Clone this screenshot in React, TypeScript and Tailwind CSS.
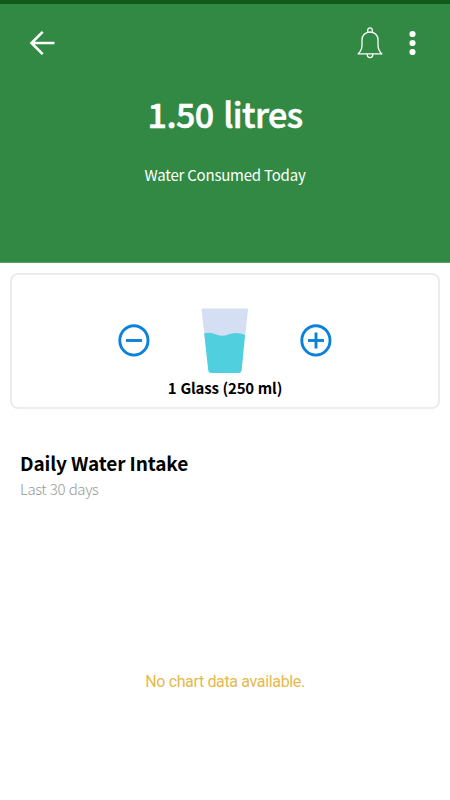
import { useState } from 'react'

const GLASS_ML = 250

function BackIcon() {
  return (
    <svg width="26" height="26" viewBox="0 0 26 26" fill="none" stroke="#fff" strokeWidth="2.6">
      <path d="M25.5 13H3M13.7 1.8L2.5 13L13.7 24.2" />
    </svg>
  )
}

function BellIcon() {
  return (
    <svg width="26" height="32" viewBox="0 0 26 32" fill="none" stroke="#fff" strokeWidth="1.3">
      <path d="M10.7 5.4V3.2a2.3 2.3 0 0 1 4.6 0v2.2" />
      <path d="M13 5C8.2 5 5 8.5 5 13v5c0 4-1.3 6.5-3.9 8.9h23.8C22.3 24.5 21 22 21 18v-5c0-4.5-3.2-8-8-8z" strokeLinejoin="round" />
      <path d="M10.2 27a2.8 3.7 0 0 0 5.6 0" />
    </svg>
  )
}

function MoreIcon() {
  return (
    <svg width="8" height="26" viewBox="0 0 8 26" fill="#fff">
      <circle cx="4.5" cy="4" r="3.1" />
      <circle cx="4.5" cy="13" r="3.1" />
      <circle cx="4.5" cy="22" r="3.1" />
    </svg>
  )
}

function RoundIcon({ plus = false }: { plus?: boolean }) {
  return (
    <svg width="32" height="34" viewBox="0 0 32 34" fill="none" stroke="#0a82dc" strokeWidth="2.9">
      <ellipse cx="15.9" cy="16.4" rx="14.1" ry="14.7" />
      <path d="M8 16.5h16" />
      {plus && <path d="M16 8.5v16" />}
    </svg>
  )
}

function GlassIcon() {
  return (
    <svg width="48" height="66" viewBox="0 0 48 66">
      <path d="M1.5 0.5h44.2a1.3 1.3 0 0 1 1.3 1.5L44 30H3.8L0.6 2a1.3 1.3 0 0 1 .9-1.5z" fill="#d5dff4" />
      <path d="M3.2 25.5c4-1.7 8-.6 12 1 4.5 1.7 8 1.6 12 0 5.5-2.1 11-2.2 16.9.6L40.7 62c-.2 2-1.2 3-2.9 3H10.2c-1.7 0-2.8-1-3-3z" fill="#50cfde" />
    </svg>
  )
}

export default function App() {
  const [glasses, setGlasses] = useState(6)
  const litres = ((glasses * GLASS_ML) / 1000).toFixed(2)

  return (
    <div className="flex h-[800px] w-[450px] flex-col overflow-hidden bg-white font-['Noto_Sans_CJK_SC','Noto_Sans',sans-serif]">
      <header className="h-[263px] shrink-0 border-t-4 border-b border-t-[#125a1b] border-b-[#58a168] bg-[#318943] text-white">
        <div className="flex h-[78px] items-center pr-[34px] pl-[29px]">
          <button className="mr-auto" aria-label="Back"><BackIcon /></button>
          <button className="mr-[25px]" aria-label="Reminders"><BellIcon /></button>
          <button aria-label="More"><MoreIcon /></button>
        </div>
        <div className="flex flex-col items-center whitespace-nowrap">
          <h1 className="mt-[7px] h-[50px] text-[34px] leading-[50px] font-medium tracking-[-0.55px] [word-spacing:2.5px] [-webkit-text-stroke:0.6px_white]">{litres} litres</h1>
          <p className="mt-6 text-[15px] leading-6 tracking-[-0.22px]">Water Consumed Today</p>
        </div>
      </header>

      <section className="mx-[10px] mt-[10px] flex h-[136px] shrink-0 flex-col items-center rounded-lg border-2 border-[#ececec] pt-[33px]">
        <div className="flex items-center justify-center">
          <button aria-label="Remove a glass" onClick={() => setGlasses(Math.max(0, glasses - 1))}>
            <RoundIcon />
          </button>
          <div className="mx-[51px]"><GlassIcon /></div>
          <button aria-label="Add a glass" onClick={() => setGlasses(glasses + 1)}>
            <RoundIcon plus />
          </button>
        </div>
        <p className="mt-[3px] text-[15px] leading-[22px] font-bold tracking-[-0.2px] [word-spacing:0.7px] whitespace-nowrap text-black">1 Glass ({GLASS_ML} ml)</p>
      </section>

      <section className="flex flex-1 flex-col px-5 pt-10">
        <h2 className="text-[19px] leading-7 font-bold tracking-[-0.12px] text-black">Daily Water Intake</h2>
        <p className="mt-px text-[15px] leading-[22px] font-light tracking-[-0.4px] [word-spacing:0.7px] text-[#999]">Last 30 days</p>
        <p className="mt-[170px] text-center font-[Roboto,sans-serif] text-base leading-6 tracking-[-0.35px] text-[#e5b94d]">
          No chart data available.
        </p>
      </section>
    </div>
  )
}
